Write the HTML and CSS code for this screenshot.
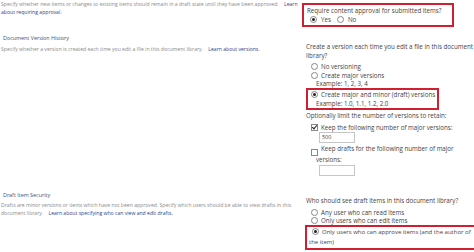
FILE: index.html
```html
<!DOCTYPE html>
<html lang="en">
<head>
  <meta charset="UTF-8" />
  <title>Versioning Settings</title>
  <link rel="stylesheet" href="styles.css">
</head>
<body>
  <div class="section first">
    <div class="info">
      <p class="desc">Specify whether new items or changes to existing items should remain in a draft state until they have been approved. <a href="#">Learn about requiring approval.</a></p>
    </div>
    <div class="control">
      <div class="boxed box-approval">
        <div class="label">Require content approval for submitted items?</div>
        <div class="inline-opts">
          <span class="radio checked"></span><span class="opt">Yes</span>
          <span class="radio"></span><span class="opt">No</span>
        </div>
      </div>
    </div>
  </div>

  <div class="section second">
    <div class="info">
      <h3 class="heading">Document Version History</h3>
      <p class="desc">Specify whether a version is created each time you edit a file in this document library. <a href="#">Learn about versions.</a></p>
    </div>
    <div class="control">
      <div class="label">Create a version each time you edit a file in this document library?</div>
      <div class="option first-opt"><span class="radio"></span>No versioning</div>
      <div class="option"><span class="radio"></span>Create major versions</div>
      <div class="example">Example: 1, 2, 3, 4</div>
      <div class="boxed box-minor">
        <div class="option"><span class="radio checked"></span>Create major and minor (draft) versions</div>
        <div class="example">Example: 1.0, 1.1, 1.2, 2.0</div>
      </div>
      <div class="label limit">Optionally limit the number of versions to retain:</div>
      <div class="check-row first-check"><span class="check checked"></span>Keep the following number of major versions:</div>
      <div class="textbox">500</div>
      <div class="check-row second-check"><span class="check"></span>Keep drafts for the following number of major versions:</div>
      <div class="textbox empty"></div>
    </div>
  </div>

  <div class="section third">
    <div class="info">
      <h3 class="heading">Draft Item Security</h3>
      <p class="desc">Drafts are minor versions or items which have not been approved. Specify which users should be able to view drafts in this document library. <a href="#">Learn about specifying who can view and edit drafts.</a></p>
    </div>
    <div class="control">
      <div class="label">Who should see draft items in this document library?</div>
      <div class="option first-opt"><span class="radio"></span>Any user who can read items</div>
      <div class="option"><span class="radio"></span>Only users who can edit items</div>
      <div class="boxed box-author">
        <div class="author-opt"><span class="radio checked"></span>Only users who can approve items (and the author of the item)</div>
      </div>
    </div>
  </div>
</body>
</html>
```

FILE: styles.css
```css
body {
  margin: 0;
  background: #fff;
  font-family: "Open Sans", "Noto Sans", sans-serif;
  color: #444;
  width: 474px;
  height: 252px;
  overflow: hidden;
}
.section {
  display: flex;
}
.info {
  width: 306px;
  flex-shrink: 0;
}
.control {
  width: 168px;
  font-size: 6.2px;
  line-height: 9px;
  color: #444;
}
.desc {
  margin: 0;
  padding-left: 1px;
  font-size: 5.1px;
  line-height: 8px;
  color: #8a8a8a;
  width: 300px;
}
.desc a {
  color: #2b3f8c;
  text-decoration: none;
  margin-left: 4px;
}
.heading {
  margin: 0;
  padding-left: 3px;
  font-weight: normal;
  font-size: 5.4px;
  color: #3d4f7a;
  line-height: 10px;
}
.boxed {
  border: 2px solid #d21f2f;
}
.box-approval {
  margin-left: -4px;
  margin-top: 3px;
  width: 145px;
  padding: 1px 0 1px 3px;
}
.inline-opts {
  display: flex;
  align-items: center;
  padding-left: 3px;
}
.opt {
  margin-left: 4px;
  margin-right: 6px;
}
.radio {
  display: inline-block;
  width: 5px;
  height: 5px;
  border: 1px solid #888;
  border-radius: 50%;
  background: #fff;
  position: relative;
  vertical-align: -1px;
}
.radio.checked::after {
  content: "";
  position: absolute;
  left: 1px;
  top: 1px;
  width: 3px;
  height: 3px;
  border-radius: 50%;
  background: #222;
}
.option {
  padding-left: 5px;
}
.option .radio {
  margin-right: 3px;
}
.example {
  padding-left: 10px;
  line-height: 8px;
}
.second {
  margin-top: 6px;
}
.second .heading {
  margin-bottom: 2px;
}
.second .control {
  padding-top: 9px;
}
.first-opt {
  margin-top: 2px;
}
.box-minor {
  width: 129px;
}
.box-minor .option {
  padding-left: 3px;
}
.box-minor .example {
  padding-left: 8px;
  line-height: 9px;
}
.limit {
  margin-top: 1px;
}
.check-row {
  padding-left: 10px;
}
.check {
  display: inline-block;
  width: 5px;
  height: 5px;
  border: 1px solid #888;
  margin-left: -5px;
  margin-right: 3px;
  position: relative;
  vertical-align: -1px;
}
.check.checked::after {
  content: "";
  position: absolute;
  left: 1px;
  top: -1px;
  width: 2px;
  height: 4px;
  border: solid #222;
  border-width: 0 1px 1px 0;
  transform: rotate(40deg);
}
.first-check {
  margin-top: 3px;
}
.second-check {
  margin-top: 2px;
  line-height: 8px;
}
.second-check .check {
  vertical-align: -5px;
}
.textbox {
  margin-left: 13px;
  width: 32px;
  height: 9px;
  border: 1px solid #c6c6c6;
  font-size: 5.4px;
  line-height: 9px;
  padding-left: 2px;
  color: #444;
}
.textbox.empty {
  margin-top: 1px;
}
.third {
  margin-top: 14px;
}
.third .heading {
  margin-bottom: 1px;
}
.third .control {
  padding-top: 6px;
}
.third .option {
  line-height: 8px;
}
.third .first-opt {
  margin-top: 4px;
}
.box-author {
  margin-left: -1px;
  padding: 0 0 1px 2px;
  width: 172px;
}
.author-opt {
  width: 166px;
  font-size: 6px;
  line-height: 10px;
}
.author-opt .radio {
  margin-left: 3px;
  margin-right: 3px;
}
```
